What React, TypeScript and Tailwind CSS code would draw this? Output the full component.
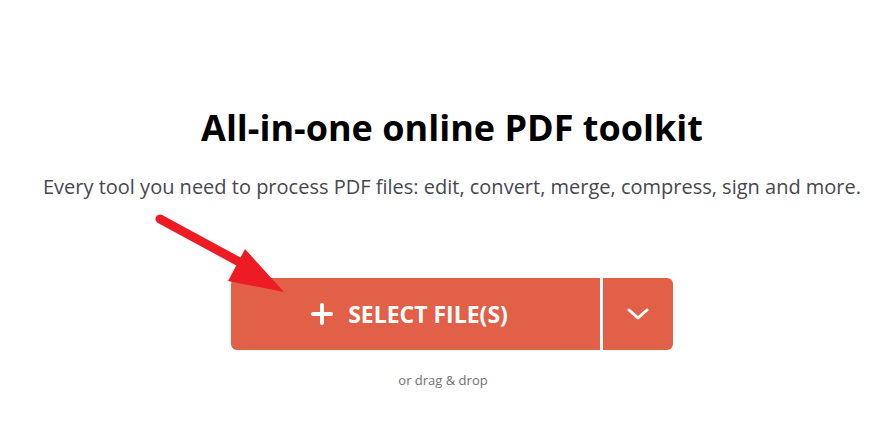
export default function App() {
  return (
    <div className="relative min-h-[435px] w-full bg-white" style={{ fontFamily: '"Open Sans", sans-serif' }}>
      <div className="flex flex-col items-center pl-[28px] pt-[104px]">
        <h1 className="text-[36px] leading-[48px] font-bold text-black">All-in-one online PDF toolkit</h1>
        <p className="mt-[21px] text-[20px] leading-[28px] text-[#47474f]">
          Every tool you need to process PDF files: edit, convert, merge, compress, sign and more.
        </p>
        <div className="mt-[77px] flex h-[72px] gap-[3px]">
          <button className="flex w-[369px] items-center justify-center gap-[15px] rounded-l-[6px] bg-[#e25f48] pr-[12px] text-white">
            <svg width="22" height="22" viewBox="0 0 22 22" fill="none" stroke="currentColor" strokeWidth="4" strokeLinecap="round">
              <line x1="11" y1="2" x2="11" y2="20" />
              <line x1="2" y1="11" x2="20" y2="11" />
            </svg>
            <span className="text-[23px] leading-[30px] font-bold uppercase">Select file(s)</span>
          </button>
          <button className="flex w-[70px] items-center justify-center rounded-r-[6px] bg-[#e25f48] text-white">
            <svg width="22" height="14" viewBox="0 0 22 14" fill="none" stroke="currentColor" strokeWidth="3" strokeLinecap="round" strokeLinejoin="round">
              <polyline points="2,3 11,11 20,3" />
            </svg>
          </button>
        </div>
        <p className="mt-[21px] mr-[18px] text-[13px] leading-[18px] text-[#707070]">or drag &amp; drop</p>
      </div>
      {/* annotation arrow */}
      <svg className="pointer-events-none absolute left-0 top-0" width="876" height="435">
        <line x1="160" y1="219" x2="256" y2="271" stroke="#ed1c24" strokeWidth="9" strokeLinecap="round" />
        <polygon points="245,249 284,292 228,281" fill="#ed1c24" />
      </svg>
    </div>
  )
}
